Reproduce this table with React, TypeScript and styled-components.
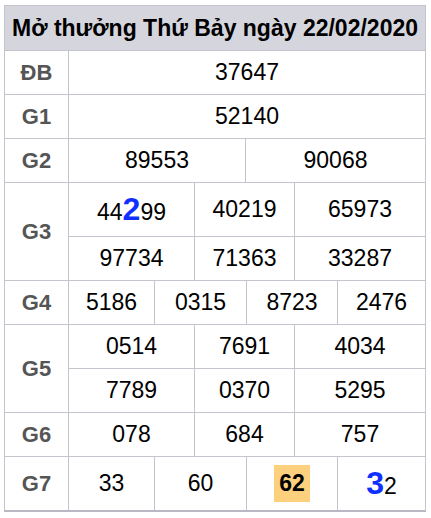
import React from 'react';
import styled, { createGlobalStyle } from 'styled-components';

type Part = { text: string; big?: boolean };
type Value = string | { parts: Part[] } | { mark: string };

interface Group {
  label: string;
  cols: string;
  lines: { height?: number; values: Value[] }[];
}

const groups: Group[] = [
  { label: 'ĐB', cols: '1fr', lines: [{ values: ['37647'] }] },
  { label: 'G1', cols: '1fr', lines: [{ values: ['52140'] }] },
  { label: 'G2', cols: '177px 1fr', lines: [{ values: ['89553', '90068'] }] },
  {
    label: 'G3',
    cols: '126px 100px 1fr',
    lines: [
      {
        height: 53,
        values: [{ parts: [{ text: '44' }, { text: '2', big: true }, { text: '99' }] }, '40219', '65973'],
      },
      { values: ['97734', '71363', '33287'] },
    ],
  },
  { label: 'G4', cols: '86px 92px 91px 1fr', lines: [{ values: ['5186', '0315', '8723', '2476'] }] },
  {
    label: 'G5',
    cols: '126px 100px 1fr',
    lines: [{ values: ['0514', '7691', '4034'] }, { values: ['7789', '0370', '5295'] }],
  },
  { label: 'G6', cols: '126px 100px 1fr', lines: [{ values: ['078', '684', '757'] }] },
  {
    label: 'G7',
    cols: '86px 92px 91px 1fr',
    lines: [
      {
        height: 53,
        values: ['33', '60', { mark: '62' }, { parts: [{ text: '3', big: true }, { text: '2' }] }],
      },
    ],
  },
];

function renderValue(v: Value) {
  if (typeof v === 'string') return v;
  if ('mark' in v) return <Mark>{v.mark}</Mark>;
  return v.parts.map((p, i) => (p.big ? <Big key={i}>{p.text}</Big> : <span key={i}>{p.text}</span>));
}

export default function App() {
  return (
    <Page>
      <GlobalStyle />
      <Table>
        <Header>Mở thưởng Thứ Bảy ngày 22/02/2020</Header>
        {groups.map((g) => (
          <Row key={g.label}>
            <Label>{g.label}</Label>
            <Body>
              {g.lines.map((line, i) => (
                <Line key={i} $cols={g.cols} $height={line.height ?? 43}>
                  {line.values.map((v, j) => (
                    <Cell key={j}>{renderValue(v)}</Cell>
                  ))}
                </Line>
              ))}
            </Body>
          </Row>
        ))}
      </Table>
    </Page>
  );
}

const GlobalStyle = createGlobalStyle`
  body {
    margin: 0;
    background: #fff;
    font-family: "Liberation Sans", Arial, sans-serif;
  }
`;

const Page = styled.div`
  padding: 5px 0 0 4px;
`;

const Table = styled.div`
  width: 422px;
  box-sizing: border-box;
  border: 1px solid #c4c4cd;
  border-bottom-width: 2px;
  border-bottom-color: #b9b9c3;
`;

const Header = styled.div`
  height: 44px;
  line-height: 44px;
  background: #d5d5dd;
  border-bottom: 1px solid #c4c4cd;
  text-align: center;
  font-size: 23px;
  font-weight: bold;
  color: #000;
  white-space: nowrap;
`;

const Row = styled.div`
  display: flex;
  border-bottom: 1px solid #c4c4cd;

  &:last-child {
    border-bottom: none;
  }
`;

const Label = styled.div`
  width: 64px;
  box-sizing: border-box;
  flex-shrink: 0;
  display: flex;
  align-items: center;
  justify-content: center;
  border-right: 1px solid #c4c4cd;
  font-size: 22px;
  font-weight: bold;
  color: #555;
`;

const Body = styled.div`
  flex: 1;
  display: flex;
  flex-direction: column;
`;

const Line = styled.div<{ $cols: string; $height: number }>`
  display: grid;
  grid-template-columns: ${(p) => p.$cols};
  height: ${(p) => p.$height}px;
  border-bottom: 1px solid #c4c4cd;

  &:last-child {
    border-bottom: none;
  }
`;

const Cell = styled.div`
  box-sizing: border-box;
  display: flex;
  align-items: baseline;
  justify-content: center;
  padding-top: 0;
  border-right: 1px solid #c4c4cd;
  font-size: 23px;
  color: #000;
  align-content: center;
  flex-wrap: wrap;

  &:last-child {
    border-right: none;
  }
`;

const Big = styled.span`
  font-size: 32px;
  font-weight: bold;
  color: #1030ff;
`;

const Mark = styled.span`
  display: inline-block;
  padding: 4px 5px;
  line-height: 29px;
  background: #fdd07e;
  font-weight: bold;
`;
